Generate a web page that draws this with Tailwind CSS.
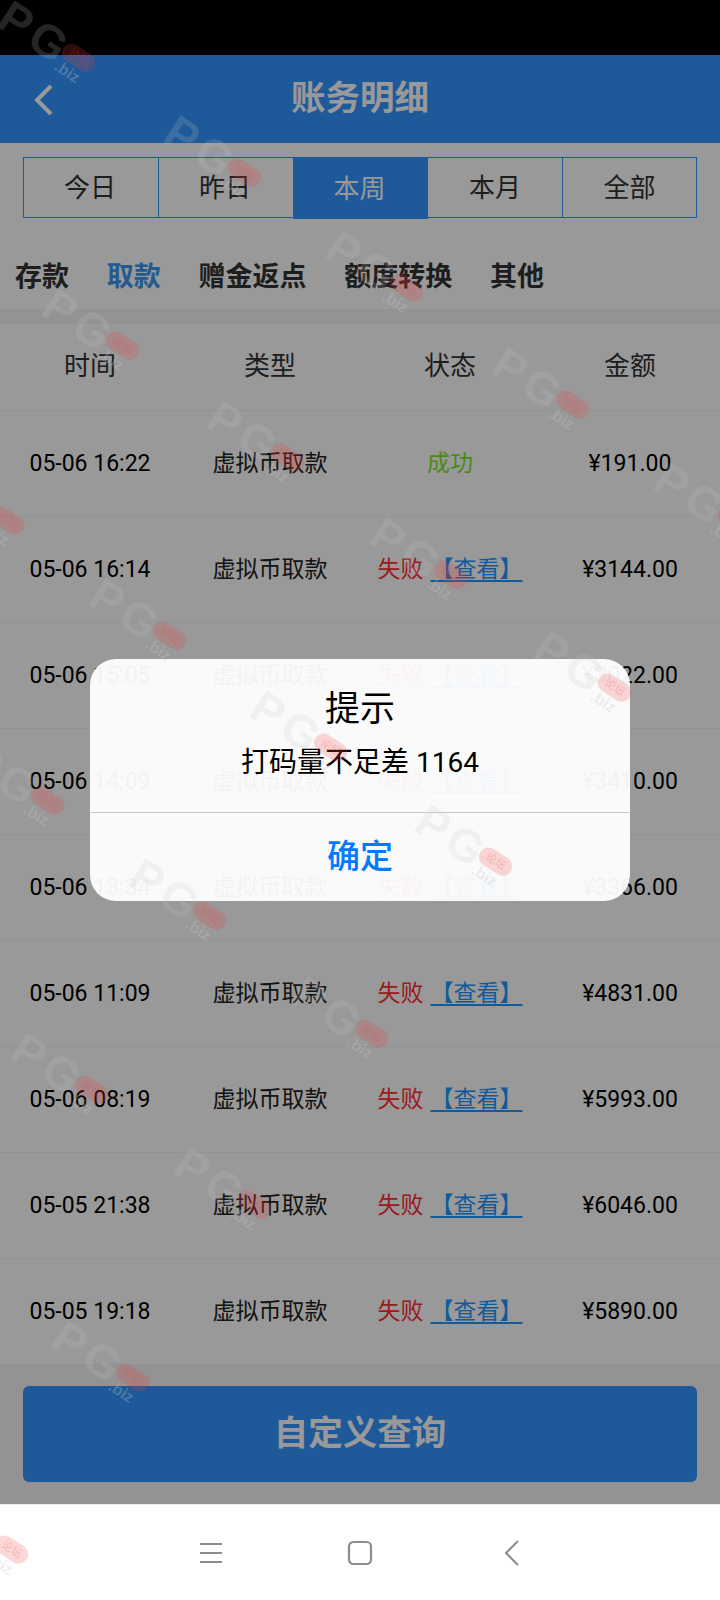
<!DOCTYPE html>
<html lang="zh-CN">
<head>
  <meta charset="UTF-8" />
  <title>账务明细</title>
  <script src="https://cdn.jsdelivr.net/npm/@tailwindcss/browser@4"></script>
</head>
<body class="bg-white font-['Roboto','Noto_Sans_CJK_SC',sans-serif]">
<div class="relative w-[720px] h-[1600px] overflow-hidden flex flex-col">

  <!-- Status bar -->
  <div class="h-[55px] bg-black shrink-0"></div>

  <!-- Page -->
  <div class="relative h-[1449px] flex flex-col bg-white">
    <header class="relative h-[88px] bg-[#3296ff] flex items-center justify-center shrink-0">
      <svg class="absolute left-[32px] top-[28px]" width="24" height="34" viewBox="0 0 24 34" fill="none">
        <path d="M19 3 L5 17 L19 31" stroke="white" stroke-width="4" />
      </svg>
      <h1 class="text-[34.5px] leading-[44px] font-bold text-white -mt-[3px]">账务明细</h1>
    </header>

    <!-- Date tabs -->
    <div class="h-[166px] shrink-0 pt-[14px]">
      <div class="mx-[23px] h-[61px] flex border border-[#3296ff] text-[26px] text-[#333]">
        <div class="w-[135px] pt-[2px] pr-[2px] flex items-center justify-center border-r border-[#3296ff]">今日</div>
        <div class="w-[134px] pt-[2px] pr-[2px] flex items-center justify-center">昨日</div>
        <div class="w-[135px] h-[62px] -mt-px pt-[2px] pr-[2px] flex items-center justify-center bg-[#3296ff] text-white rounded-b-[1px]">本周</div>
        <div class="w-[135px] pt-[2px] flex items-center justify-center border-r border-[#3296ff]">本月</div>
        <div class="flex-1 pt-[2px] flex items-center justify-center">全部</div>
      </div>
      <!-- Type tabs -->
      <nav class="flex gap-[37.75px] pl-[15px] mt-[40px] text-[27px] leading-[38px] font-bold text-[#333]">
        <span>存款</span>
        <span class="text-[#3d96f0]">取款</span>
        <span>赠金返点</span>
        <span>额度转换</span>
        <span>其他</span>
      </nav>
    </div>
    <div class="h-[15px] bg-[#f3f5f3] shrink-0"></div>

    <!-- Table -->
    <div class="h-[86px] shrink-0 grid grid-cols-4 items-center text-center text-[26px] text-[#333] pb-[2px]">
      <span>时间</span><span>类型</span><span>状态</span><span>金额</span>
    </div>
    <div id="rows"></div>

    <!-- Footer -->
    <div class="flex-1 bg-[#f3f5f3] px-[23px] pt-[22px]">
      <button class="w-full h-[96px] bg-[#3296ff] rounded-[6px] text-white text-[34.5px] font-bold">自定义查询</button>
    </div>

    <!-- Dialog overlay -->
    <div class="absolute inset-0 bg-black/40 flex items-center justify-center">
      <div class="w-[540px] h-[242px] rounded-[26px] bg-white/95 flex flex-col text-black">
        <div class="h-[154px] border-b border-[#c9c9c9] pt-[29px] text-center">
          <p class="text-[35px] leading-[44px]">提示</p>
          <p class="text-[28px] leading-[36px] mt-[13px]">打码量不足差 1164</p>
        </div>
        <div class="flex-1 flex items-center justify-center text-[33px] font-medium text-[#007aff]">确定</div>
      </div>
    </div>
  </div>

  <!-- Android nav -->
  <div class="h-[96px] bg-white border-t border-[#eeeeee] flex-1 relative">
    <svg class="absolute left-[200px] top-[37px]" width="22" height="22" viewBox="0 0 22 22" fill="none" stroke="#8c8c8c" stroke-width="2">
      <path d="M0 2H22M0 11H22M0 20H22" />
    </svg>
    <svg class="absolute left-[347px] top-[35px]" width="26" height="26" viewBox="0 0 26 26" fill="none" stroke="#8c8c8c" stroke-width="2.2">
      <rect x="2" y="2" width="22" height="22" rx="4.5" />
    </svg>
    <svg class="absolute left-[504px] top-[35px]" width="16" height="26" viewBox="0 0 16 26" fill="none" stroke="#8c8c8c" stroke-width="2">
      <path d="M14 1 L2 13 L14 25" />
    </svg>
  </div>

  <!-- Watermarks -->
  <div id="marks" class="absolute inset-0 pointer-events-none"></div>
</div>

<script>
  const rows = [
    ["05-06 16:22", "成功", "¥191.00"],
    ["05-06 16:14", "失败", "¥3144.00"],
    ["05-06 15:05", "失败", "¥3022.00"],
    ["05-06 14:09", "失败", "¥3410.00"],
    ["05-06 13:34", "失败", "¥3366.00"],
    ["05-06 11:09", "失败", "¥4831.00"],
    ["05-06 08:19", "失败", "¥5993.00"],
    ["05-05 21:38", "失败", "¥6046.00"],
    ["05-05 19:18", "失败", "¥5890.00"]
  ];

  const rowsEl = document.getElementById("rows");
  rows.forEach(([time, status, amount]) => {
    const state = status === "成功"
      ? `<span class="text-[#7ee62b]">成功</span>`
      : `<span class="text-[#ff2d2d]">失败</span><a class="ml-[7px] text-[#2096ff] underline decoration-2 underline-offset-[3px]">【查看】</a>`;
    const div = document.createElement("div");
    div.className = "h-[106px] pt-[2px] grid grid-cols-4 items-center text-center text-[23px] text-black border-t border-[#f6f6f6]";
    div.innerHTML = `<span>${time}</span><span class="text-[#222]">虚拟币取款</span><span class="whitespace-nowrap">${state}</span><span>${amount}</span>`;
    rowsEl.appendChild(div);
  });

  // centre of the P of each watermark
  const marks = [
    [16, 20], [182, 135], [344, 250], [510, 367], [672, 482],
    [60, 308], [225, 420], [388, 537], [552, 650],
    [-55, 483], [107, 598], [268, 710], [433, 824],
    [-15, 763], [147, 878], [309, 996],
    [29, 1052], [192, 1167], [70, 1340], [-51, 1512]
  ];

  const marksEl = document.getElementById("marks");
  marks.forEach(([x, y]) => {
    const m = document.createElement("div");
    m.className = "absolute w-0 h-0 rotate-[33deg] origin-top-left";
    m.style.left = x + "px";
    m.style.top = y + "px";
    m.innerHTML = `
      <span class="absolute left-[-15px] top-[-23px] text-[46px] leading-[46px] font-bold tracking-[5px] font-['Liberation_Sans'] text-[#c8c8c8]/20">PG</span>
      <span class="absolute left-[55px] top-[-12px] w-[36px] h-[19px] rounded-full bg-[#f03c3c]/20 text-[11px] leading-[19px] text-center text-[#f03c3c]/25">论坛</span>
      <span class="absolute left-[58px] top-[6px] text-[16px] leading-[20px] font-bold font-['Liberation_Sans'] text-[#c8c8c8]/30">.biz</span>`;
    marksEl.appendChild(m);
  });
</script>
</body>
</html>
